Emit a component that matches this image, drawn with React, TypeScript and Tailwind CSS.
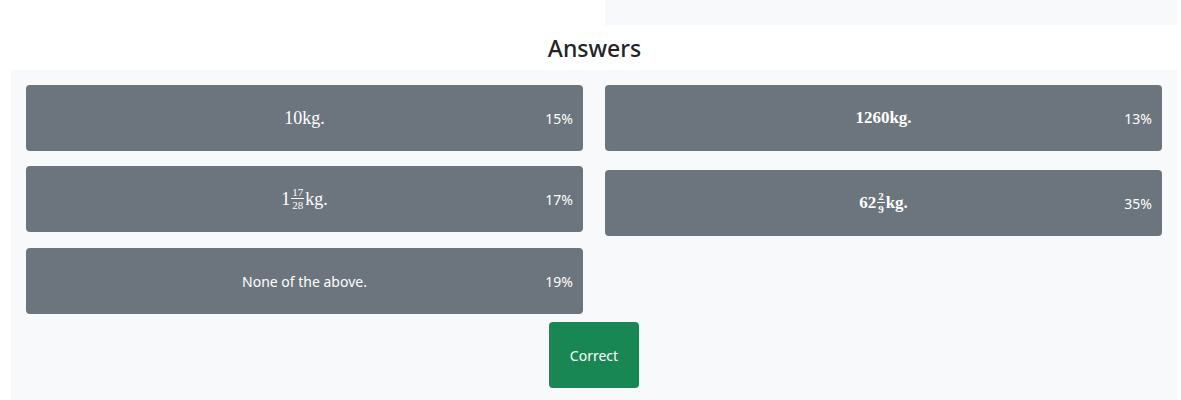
import React from "react";

const sans = { fontFamily: '"Noto Sans", "Open Sans", sans-serif' } as React.CSSProperties;
const serif = { fontFamily: '"Liberation Serif", "DejaVu Serif", serif' } as React.CSSProperties;

function Frac({ n, d }: { n: string; d: string }) {
  return (
    <span className="mx-[1px] inline-flex flex-col items-center align-middle text-[11px] leading-[10px] relative top-[-1px]">
      <span className="border-b border-white px-[1px] pb-[1px]">{n}</span>
      <span className="pt-[1px]">{d}</span>
    </span>
  );
}

function Answer({ children, pct, className = "" }: { children: React.ReactNode; pct: string; className?: string }) {
  return (
    <div className={`relative flex h-[66px] items-center justify-center rounded-[4px] bg-[#6c757d] text-white ${className}`}>
      <div>{children}</div>
      <span className="absolute right-[10px] top-1/2 -translate-y-1/2 text-[14px]" style={sans}>
        {pct}
      </span>
    </div>
  );
}

export default function App() {
  return (
    <div className="w-[1181px] h-[400px] overflow-hidden bg-white" style={sans}>
      <div className="flex h-[25px]">
        <div className="w-[605px]" />
        <div className="w-[573px] bg-[#f8f9fa]" />
      </div>
      <div className="flex h-[45px] w-[1189px] items-center justify-center pt-[2px]">
        <h3 className="text-[23px] font-medium leading-none text-[#212529]">Answers</h3>
      </div>
      <div className="ml-[11px] w-[1167px] bg-[#f8f9fa] pl-[15px] pr-[16px] pt-[15px] pb-[20px]">
        <div className="grid grid-cols-2 gap-x-[22px]">
          <div className="flex flex-col">
            <Answer pct="15%">
              <span className="text-[18px]" style={serif}>10kg.</span>
            </Answer>
            <Answer pct="17%" className="mt-[15px]">
              <span className="text-[18px] flex items-center" style={serif}>
                1<Frac n="17" d="28" />kg.
              </span>
            </Answer>
            <Answer pct="19%" className="mt-[16px]">
              <span className="text-[14px]" style={sans}>None of the above.</span>
            </Answer>
          </div>
          <div className="flex flex-col">
            <Answer pct="13%">
              <span className="text-[17px] font-bold" style={serif}>1260kg.</span>
            </Answer>
            <Answer pct="35%" className="mt-[19px]">
              <span className="text-[17px] font-bold flex items-center" style={serif}>
                62<Frac n="2" d="9" />kg.
              </span>
            </Answer>
          </div>
        </div>
        <div className="mt-[8px] flex justify-center">
          <button className="h-[66px] w-[90px] rounded-[4px] bg-[#198754] text-[14px] text-white" style={sans}>
            Correct
          </button>
        </div>
      </div>
    </div>
  );
}
